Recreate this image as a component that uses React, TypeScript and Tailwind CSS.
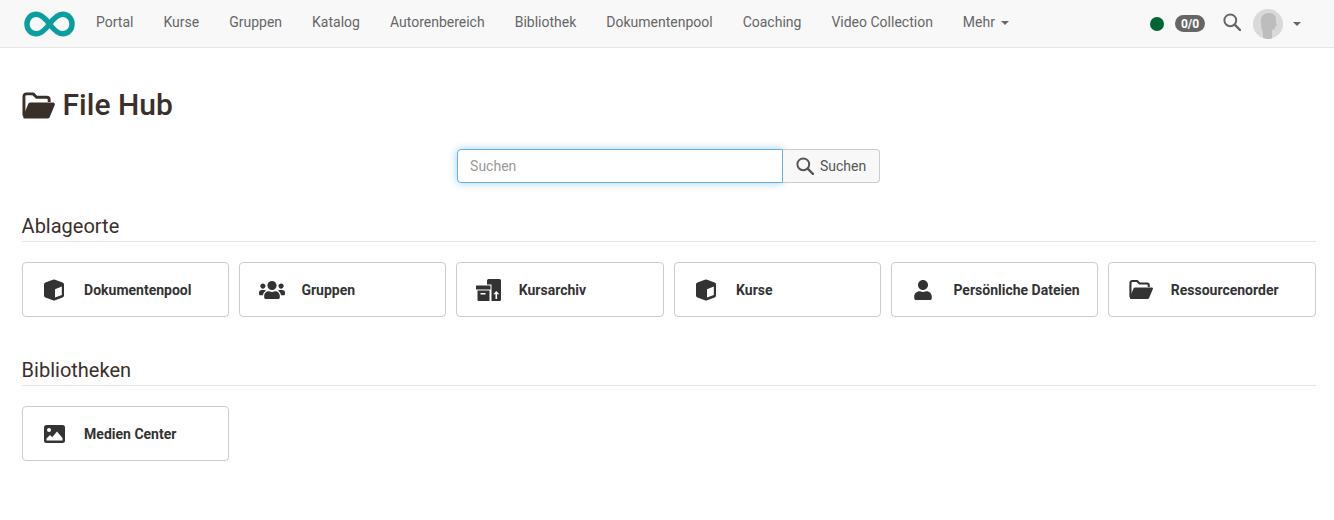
import React from "react";
import { FaUsers, FaUser } from "react-icons/fa";

const nav = ["Portal", "Kurse", "Gruppen", "Katalog", "Autorenbereich", "Bibliothek", "Dokumentenpool", "Coaching", "Video Collection"];

function ArchiveIcon() {
  return (
    <svg width="26" height="22" viewBox="0 0 26 22" fill="#333">
      <path d="M11 1.500A1.500 1.500 0 0 1 12.500 0h11A1.500 1.500 0 0 1 25 1.500v19a1.500 1.500 0 0 1-1.500 1.500h-8V5.500H11z" />
      <rect x="0" y="6.500" width="14.500" height="4" rx="0.500" />
      <path d="M1.500 11.500h12V22H2.500a1 1 0 0 1-1-1z" />
      <rect x="4.500" y="14" width="5" height="1.500" fill="#fff" />
      <path d="M20.300 12l3 3.300h-2.200V20h-1.600v-4.700h-2.200z" fill="#fff" />
    </svg>
  );
}

function CubeIcon() {
  return (
    <svg width="22" height="22" viewBox="0 0 22 22">
      <path
        d="M9.800 0.700a3.500 3.500 0 0 1 2.400 0L19.600 3.400A2.200 2.200 0 0 1 21 5.500V16.500A2.200 2.200 0 0 1 19.600 18.500L12.200 21.300a3.500 3.500 0 0 1-2.400 0L2.400 18.500A2.200 2.200 0 0 1 1 16.500V5.500A2.200 2.200 0 0 1 2.400 3.400z"
        fill="#333"
      />
      <path d="M12 10.300 18.800 7.600V15.900L12 18.600z" fill="#fff" />
    </svg>
  );
}

function FolderIcon({ w, h, color }: { w: number; h: number; color: string }) {
  return (
    <svg width={w} height={h} viewBox="0 0 34 27" fill="none">
      <path
        d="M2 24V4A2.500 2.500 0 0 1 4.500 1.500H11.500L15 5H25.500A2.500 2.500 0 0 1 28 7.500V10"
        stroke={color}
        strokeWidth="3"
        strokeLinejoin="round"
      />
      <path d="M8.500 10.500H32A1.800 1.800 0 0 1 33.700 13L28.500 25.500A2.500 2.500 0 0 1 26.200 27H3A2 2 0 0 1 1.300 24.300L6.500 11.800A2.200 2.200 0 0 1 8.500 10.500z" fill={color} />
    </svg>
  );
}

function ImageIcon() {
  return (
    <svg width="21" height="18" viewBox="0 0 21 18">
      <rect width="21" height="18" rx="2.500" fill="#333" />
      <circle cx="5" cy="5" r="2" fill="#fff" />
      <path d="M2.500 15.500V13.500L6 10l2.200 2.200 4.800-5.700 5.500 6.500v2.500z" fill="#fff" />
    </svg>
  );
}

function SearchIcon({ size, color }: { size: number; color: string }) {
  return (
    <svg width={size} height={size} viewBox="0 0 18 18" fill="none" stroke={color}>
      <circle cx="7.300" cy="7.300" r="5.900" strokeWidth="2" />
      <path d="M11.700 11.700 17 17" strokeWidth="2.400" strokeLinecap="round" />
    </svg>
  );
}

function Card({ icon, label, nudge }: { icon: React.ReactNode; label: string; nudge?: boolean }) {
  return (
    <div className="flex h-[55px] items-center rounded border border-[#ccc] bg-white">
      <div className={nudge ? "flex w-[62px] justify-center pl-[2px] text-[#333]" : "flex w-[62px] justify-center text-[#333]"}>{icon}</div>
      <span className="mt-[1px] ml-[-0.5px] text-[14px] font-bold text-[#333]">{label}</span>
    </div>
  );
}

export default function App() {
  return (
    <div className="h-[520px] w-[1334px] overflow-hidden bg-white font-['Roboto',sans-serif] text-[#3b2f2a]">
      <header className="flex h-[48px] items-center border-b border-[#e7e7e7] bg-[#f8f8f8]">
        <div className="ml-[24px] mr-[6px] flex w-[51px] items-center">
          <svg width="52" height="26" viewBox="0 0 52 26" fill="none">
            <path
              d="M26 13C22 7.500 18 3 12.500 3 7 3 3 7.500 3 13s4 10 9.500 10C18 23 22 18.500 26 13c4-5.500 8-10 13.500-10S49 7.500 49 13s-4 10-9.500 10C34 23 30 18.500 26 13z"
              stroke="#0a9e9e"
              strokeWidth="5.500"
            />
          </svg>
        </div>
        <nav className="mb-[2px] flex items-center">
          {nav.map((n) => (
            <span key={n} className="px-[15px] text-[14px] text-[#666]">{n}</span>
          ))}
          <span className="flex items-center gap-[6px] px-[15px] text-[14px] text-[#666]">
            Mehr
            <span className="mt-[1px] h-0 w-0 border-x-[4px] border-t-[4px] border-x-transparent border-t-[#666]" />
          </span>
        </nav>
        <div className="ml-auto flex items-center">
          <span className="h-[14px] w-[14px] rounded-full bg-[#006633]" />
          <span className="ml-[11px] flex h-[17px] w-[30px] items-center justify-center rounded-full bg-[#666] text-[12px] font-bold leading-none text-white">0/0</span>
          <div className="mb-[3px] ml-[18px]">
            <SearchIcon size={18} color="#666" />
          </div>
          <div className="ml-[12px] flex h-[30px] w-[30px] items-center justify-center overflow-hidden rounded-full bg-[#d9d9d9]">
            <svg width="30" height="30" viewBox="0 0 30 30" fill="#bdbdbd">
              <path d="M8 11c0-4 3-7 8-7s7 3 7 7c0 2 0 3 .5 4 .5 2-1 2.500-1.500 3 0 2-1 3-3 3v9H10v-6c0-2-1.500-3-1.500-5S7.500 14 8 11z" />
            </svg>
          </div>
          <span className="ml-[10px] mr-[33px] mt-[1px] h-0 w-0 border-x-[4px] border-t-[4px] border-x-transparent border-t-[#666]" />
        </div>
      </header>

      <main className="pl-[21.6px] pr-[18.4px]">
        <h1 className="mt-[38px] flex h-[38px] items-center text-[30px] font-medium leading-none text-[#3b2f2a]">
          <span className="mr-[8px] flex">
            <FolderIcon w={33} h={27} color="#3b2f2a" />
          </span>
          File Hub
        </h1>

        <div className="mt-[25px] flex justify-center">
          <div className="flex h-[34px] w-[326px] items-center rounded-l border border-[#66afe9] bg-white px-[12px] text-[14px] text-[#999] shadow-[0_0_8px_rgba(102,175,233,0.6)]">
            Suchen
          </div>
          <div className="flex h-[34px] w-[97px] items-center justify-center gap-[6px] rounded-r border border-l-0 border-[#ccc] bg-[#f8f8f8] text-[14px] text-[#555]">
            <SearchIcon size={18} color="#555" />
            Suchen
          </div>
        </div>

        <section className="mt-[30px]">
          <h2 className="border-b border-[#e5e5e5] pb-[2px] text-[20px] font-normal leading-[26px]">Ablageorte</h2>
          <div className="mt-[20px] grid grid-cols-6 gap-[10px]">
            <Card icon={<CubeIcon />} label="Dokumentenpool" />
            <Card nudge icon={<FaUsers className="text-[26px]" />} label="Gruppen" />
            <Card nudge icon={<ArchiveIcon />} label="Kursarchiv" />
            <Card icon={<CubeIcon />} label="Kurse" />
            <Card icon={<FaUser className="text-[20px]" />} label="Persönliche Dateien" />
            <Card nudge icon={<FolderIcon w={24} h={19} color="#333" />} label="Ressourcenorder" />
          </div>
        </section>

        <section className="mt-[40px]">
          <h2 className="border-b border-[#e5e5e5] pb-[2px] text-[20px] font-normal leading-[26px]">Bibliotheken</h2>
          <div className="mt-[20px] grid grid-cols-6 gap-[10px]">
            <Card nudge icon={<ImageIcon />} label="Medien Center" />
          </div>
        </section>
      </main>
    </div>
  );
}
